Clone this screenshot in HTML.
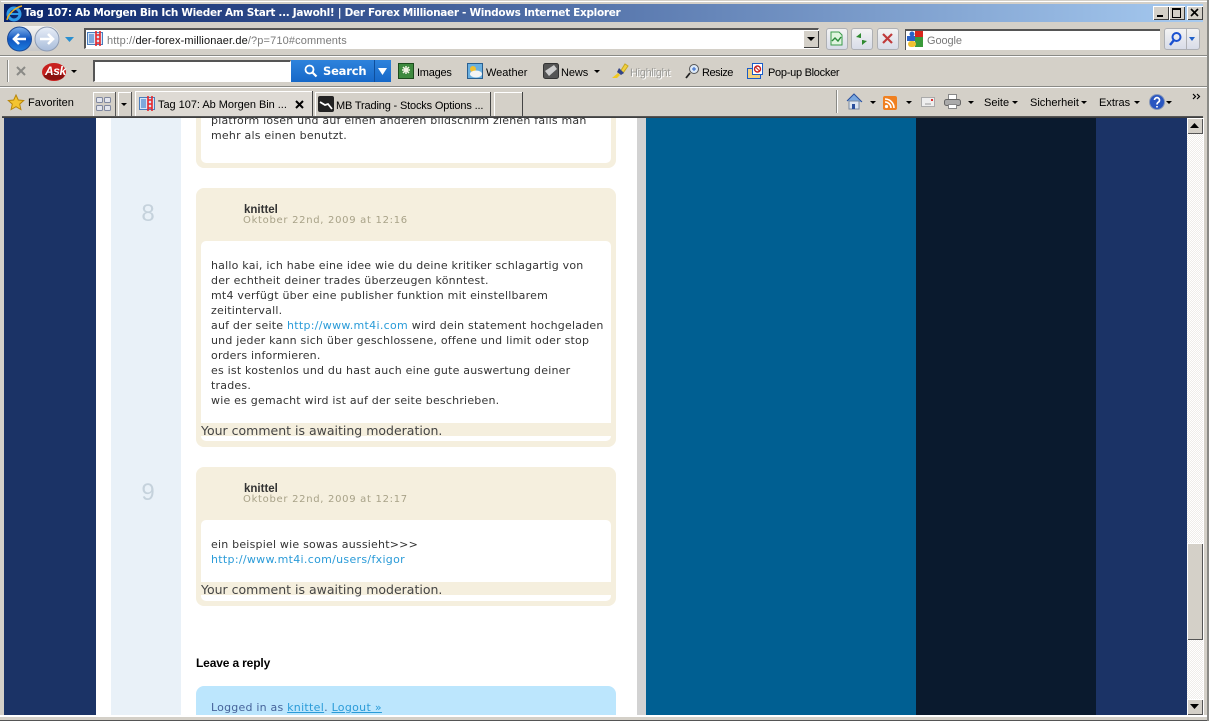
<!DOCTYPE html>
<html><head><meta charset="utf-8"><style>
html,body{margin:0;padding:0;width:1209px;height:721px;overflow:hidden;background:#d4d0c8}
.a{position:absolute}
.t{position:absolute;white-space:nowrap;font:11px/14px "Liberation Sans",sans-serif;color:#000}
.c{position:absolute;white-space:nowrap;font:11px/15px "DejaVu Sans",sans-serif;color:#333;letter-spacing:.21px}
.c a,.l{color:#2a9bd8;letter-spacing:.31px}
svg{position:absolute;overflow:visible}
.arr{position:absolute;width:0;height:0;border-left:3px solid transparent;border-right:3px solid transparent;border-top:3px solid #000}
</style></head><body>
<div class="a" style="left:0;top:0;width:1209px;height:721px;background:#d4d0c8;overflow:hidden">
<div class="a" style="left:1px;top:1px;width:1207px;height:1px;background:#fff"></div>
<div class="a" style="left:4px;top:4px;width:1199px;height:18px;background:linear-gradient(90deg,#0a246a,#a6caf0)"></div>
<svg style="left:6px;top:5px" width="17" height="17" viewBox="0 0 17 17"><ellipse cx="8" cy="9" rx="6" ry="6" fill="none" stroke="#2f9be8" stroke-width="3"/><path d="M3 9h11" stroke="#2f9be8" stroke-width="2"/><path d="M1 15C2 9 10 2 16 1" fill="none" stroke="#f0b020" stroke-width="1.5"/></svg>
<div class="t" style="left:24px;top:6px;font:bold 10.5px/15px 'DejaVu Sans',sans-serif;color:#fff;letter-spacing:-.31px">Tag 107: Ab Morgen Bin Ich Wieder Am Start ... Jawohl! | Der Forex Millionaer - Windows Internet Explorer</div>
<div class="a" style="left:1153px;top:6px;width:16px;height:14px;background:#d4d0c8;box-shadow:inset 1px 1px #fff,inset -1px -1px #404040"></div>
<div class="a" style="left:1157px;top:15px;width:6px;height:2px;background:#000"></div>
<div class="a" style="left:1169px;top:6px;width:16px;height:14px;background:#d4d0c8;box-shadow:inset 1px 1px #fff,inset -1px -1px #404040"></div>
<div class="a" style="left:1172px;top:8px;width:7px;height:7px;border:1px solid #000;border-top-width:2px"></div>
<div class="a" style="left:1187px;top:6px;width:16px;height:14px;background:#d4d0c8;box-shadow:inset 1px 1px #fff,inset -1px -1px #404040"></div>
<svg style="left:1187px;top:6px" width="16" height="14"><path d="M4 3l7 7M11 3l-7 7" stroke="#000" stroke-width="1.6"/></svg>

<!-- nav row -->
<div class="a" style="left:10px;top:26px;width:50px;height:25px;border-radius:13px;background:linear-gradient(#f4f4f4,#c8c8c8)"></div>
<svg style="left:7px;top:26px" width="54" height="26" viewBox="0 0 54 26"><defs><linearGradient id="b1" x1="0" y1="0" x2="0" y2="1"><stop offset="0" stop-color="#7fb0ea"/><stop offset=".5" stop-color="#0f55c0"/><stop offset="1" stop-color="#1f7fe0"/></linearGradient><linearGradient id="b2" x1="0" y1="0" x2="0" y2="1"><stop offset="0" stop-color="#e8eef8"/><stop offset="1" stop-color="#a8bcda"/></linearGradient></defs><circle cx="12.5" cy="13" r="12" fill="url(#b1)" stroke="#1c4a96"/><path d="M19 13H8M12 8l-5 5 5 5" fill="none" stroke="#fff" stroke-width="2.6"/><circle cx="40" cy="13" r="12" fill="url(#b2)" stroke="#8d9bb2"/><path d="M33 13h12M41 8l5 5-5 5" fill="none" stroke="#fff" stroke-width="2.6"/></svg>
<svg style="left:65px;top:37px" width="10" height="6"><path d="M0 0h9L4.500 5z" fill="#2a8fd0"/></svg>
<div class="a" style="left:84px;top:28px;width:735px;height:21px;background:#fff;border:1px solid #fff;border-top:2px solid #555;border-left:2px solid #555;box-sizing:border-box"></div>
<svg style="left:87px;top:31px" width="16" height="16"><rect x=".5" y="1.500" width="15" height="12" fill="#d5e6f7" stroke="#4a7dbd"/><rect x="2" y="3" width="5" height="9" fill="#7da8dc"/><path d="M9 0v15M13 0v15M9 4h4M9 8h4M9 12h4" stroke="#e8252a" stroke-width="1.6" fill="none"/></svg>
<div class="t" style="left:107px;top:34px;color:#7a7a7a;font-size:11px;letter-spacing:.13px">http://<span style="color:#111">der-forex-millionaer.de</span>/?p=710#comments</div>
<div class="a" style="left:803px;top:30px;width:16px;height:18px;background:#d4d0c8;box-shadow:inset 1px 1px #fff,inset -1px -1px #404040"></div>
<div class="arr" style="left:807px;top:37px;border-left-width:4px;border-right-width:4px;border-top-width:4px"></div>
<div class="a" style="left:826px;top:28px;width:20px;height:20px;border:1px solid #aeb0b4;border-radius:3px;background:linear-gradient(#f3f3f3,#d8dce8)"></div>
<svg style="left:829px;top:31px" width="15" height="15"><path d="M2 1h8l3 3v10H2z" fill="#dff5df" stroke="#3a9a4a"/><path d="M3 10l3-3 3 3 3-4" fill="none" stroke="#2a8a3a" stroke-width="1.4"/></svg>
<div class="a" style="left:851px;top:28px;width:20px;height:20px;border:1px solid #aeb0b4;border-radius:3px;background:linear-gradient(#f3f3f3,#d8dce8)"></div>
<svg style="left:854px;top:31px" width="15" height="15"><path d="M7 2L2 6l5 1zM8 14l5-4-5-1z" fill="#2f8a30"/><path d="M6 4v3M9 9v3" stroke="#2f8a30"/></svg>
<div class="a" style="left:877px;top:28px;width:20px;height:20px;border:1px solid #aeb0b4;border-radius:3px;background:linear-gradient(#f3f3f3,#d8dce8)"></div>
<svg style="left:880px;top:31px" width="15" height="15"><path d="M3 3l9 9M12 3l-9 9" stroke="#c03a3a" stroke-width="2.2"/></svg>
<div class="a" style="left:905px;top:29px;width:255px;height:21px;background:#fff;border-top:2px solid #555;border-left:1px solid #555;box-sizing:border-box"></div>
<svg style="left:907px;top:31px" width="18" height="16"><rect width="16" height="16" fill="#fff"/><rect x="8" width="8" height="6" fill="#d8261c"/><rect x="8" y="6" width="8" height="10" fill="#3a9a3a"/><rect x="0" y="5" width="8" height="5" fill="#2a62c8"/><rect x="1" y="10" width="8" height="6" rx="3" fill="#f0c030"/><circle cx="5" cy="3" r="2.500" fill="#2a62c8"/></svg>
<div class="t" style="left:927px;top:34px;color:#7a7a7a;font-size:11px;letter-spacing:-.1px">Google</div>
<div class="a" style="left:1164px;top:28px;width:34px;height:20px;border:1px solid #aeb0b4;border-radius:3px;background:linear-gradient(#f3f3f3,#d8dce8)"></div>
<div class="a" style="left:1186px;top:28px;width:1px;height:22px;background:#aeb0b4"></div>
<svg style="left:1168px;top:31px" width="15" height="16"><circle cx="8.500" cy="6" r="4" fill="none" stroke="#1a50d0" stroke-width="2"/><path d="M6 9l-4 5" stroke="#1a50d0" stroke-width="2.400"/></svg>
<div class="arr" style="left:1189px;top:37px;border-top:4px solid #2060c8"></div>

<div class="a" style="left:0;top:55px;width:1209px;height:1px;background:#8a8a86"></div>
<div class="a" style="left:0;top:56px;width:1209px;height:1px;background:#fff"></div>

<!-- ask row -->
<div class="a" style="left:7px;top:60px;width:1px;height:22px;background:#8a8a86;border-right:1px solid #fff"></div>
<svg style="left:16px;top:66px" width="11" height="10"><path d="M1 1l8 8M9 1l-8 8" stroke="#8a8a86" stroke-width="2"/></svg>
<svg style="left:42px;top:62px" width="25" height="20"><ellipse cx="12" cy="10" rx="12" ry="9" fill="#c8201e"/><ellipse cx="12" cy="14" rx="10" ry="4" fill="#8c1210"/></svg>
<div class="t" style="left:45px;top:64px;color:#fff;font:bold italic 12px/15px 'Liberation Sans',sans-serif;letter-spacing:-.4px">Ask</div>
<div class="arr" style="left:71px;top:70px"></div>
<div class="a" style="left:93px;top:60px;width:198px;height:22px;background:#fff;border-top:2px solid #555;border-left:2px solid #555;border-right:1px solid #fff;border-bottom:1px solid #fff;box-sizing:border-box"></div>
<div class="a" style="left:291px;top:60px;width:100px;height:22px;background:linear-gradient(#2e83dc,#1668c8)"></div>
<div class="a" style="left:374px;top:60px;width:1px;height:22px;background:#0f4f9c"></div>
<svg style="left:304px;top:64px" width="14" height="14"><circle cx="5.500" cy="5.500" r="4" fill="none" stroke="#fff" stroke-width="1.800"/><path d="M8.500 8.500l4 4" stroke="#fff" stroke-width="2.200"/></svg>
<div class="t" style="left:323px;top:64px;color:#fff;font:bold 11.500px/15px 'DejaVu Sans',sans-serif;letter-spacing:-.2px">Search</div>
<svg style="left:378px;top:68px" width="9" height="7"><path d="M0 0h9L4.500 7z" fill="#fff"/></svg>

<svg style="left:398px;top:63px" width="16" height="16"><rect x=".5" y=".5" width="15" height="15" fill="#3f8a3f" stroke="#1c4a1c"/><path d="M8 3v8M4 7h8M5 4l6 6M11 4l-6 6" stroke="#f2f2e4" stroke-width="1.500"/></svg>
<div class="t" style="left:417px;top:66px;letter-spacing:-.25px">Images</div>
<svg style="left:467px;top:63px" width="16" height="16"><rect x=".5" y=".5" width="15" height="15" fill="#6ab0e0" stroke="#2a5f90"/><circle cx="6" cy="6" r="3" fill="#f0c030"/><ellipse cx="9" cy="11" rx="6" ry="3.500" fill="#f4f4f4"/></svg>
<div class="t" style="left:486px;top:66px">Weather</div>
<svg style="left:543px;top:63px" width="16" height="16"><rect x=".5" y=".5" width="15" height="15" rx="2" fill="#555" stroke="#333"/><path d="M2 8l9-6 3 4-8 7z" fill="#ccc"/></svg>
<div class="t" style="left:561px;top:66px;letter-spacing:-.1px">News</div>
<div class="arr" style="left:594px;top:70px"></div>
<svg style="left:611px;top:63px" width="17" height="16"><path d="M9 9l5-8 3 2-5 7z" fill="#f0d040" stroke="#c8a820"/><path d="M8 5l5 5-3 2-4-3z" fill="#334488"/><path d="M1 15l6-5 2 2-3 3z" fill="#f0c820"/></svg>
<div class="t" style="left:630px;top:66px;color:#9a9a96;text-shadow:1px 1px 0 #fff;letter-spacing:-.3px">Highlight</div>
<svg style="left:685px;top:63px" width="15" height="16"><circle cx="9" cy="6" r="4.500" fill="#dce8f6" stroke="#555"/><path d="M9 4v4M7 6h4" stroke="#2a62c8"/><path d="M5 10l-4 5" stroke="#222" stroke-width="1.800"/></svg>
<div class="t" style="left:702px;top:66px;letter-spacing:-.45px">Resize</div>
<svg style="left:747px;top:63px" width="17" height="16"><rect x=".5" y="5.500" width="13" height="10" fill="#f2d080" stroke="#1a5cc8"/><rect x="5.500" y=".5" width="10" height="11" fill="#fff" stroke="#1a5cc8"/><circle cx="10.500" cy="6" r="3" fill="#fff" stroke="#c82020" stroke-width="1.400"/><path d="M8.500 4l4 4" stroke="#c82020"/></svg>
<div class="t" style="left:768px;top:66px;letter-spacing:-.28px">Pop-up Blocker</div>

<div class="a" style="left:0;top:86px;width:1209px;height:1px;background:#8a8a86"></div>
<div class="a" style="left:0;top:87px;width:1209px;height:1px;background:#fff"></div>

<!-- favourites row -->
<svg style="left:8px;top:94px" width="17" height="16"><path d="M8 1l2.300 5 5.400.5-4 3.600 1.200 5.400L8 12.700 3.100 15.500l1.200-5.400-4-3.600L5.700 6z" fill="#f4c430" stroke="#b8860b"/></svg>
<div class="t" style="left:28px;top:96px">Favoriten</div>
<div class="a" style="left:93px;top:92px;width:22px;height:24px;border-right:1px solid #555;box-shadow:inset 1px 1px #fff"></div>
<svg style="left:96px;top:97px" width="16" height="15"><rect x=".5" y=".5" width="6" height="5" rx="1" fill="#e4e6ee" stroke="#8088a0"/><rect x="8.500" y=".5" width="6" height="5" rx="1" fill="#e4e6ee" stroke="#8088a0"/><rect x=".5" y="8.500" width="6" height="5" rx="1" fill="#e4e6ee" stroke="#8088a0"/><rect x="8.500" y="8.500" width="6" height="5" rx="1" fill="#e4e6ee" stroke="#8088a0"/></svg>
<div class="a" style="left:118px;top:92px;width:13px;height:24px;border-right:1px solid #555;box-shadow:inset 1px 1px #fff"></div>
<div class="arr" style="left:121px;top:103px"></div>
<div class="a" style="left:135px;top:91px;width:177px;height:26px;background:#dedad4;box-shadow:inset 1px 1px #fff;border-right:1px solid #444"></div>
<svg style="left:139px;top:96px" width="16" height="16"><rect x=".5" y="1.500" width="15" height="12" fill="#d5e6f7" stroke="#4a7dbd"/><rect x="2" y="3" width="5" height="9" fill="#7da8dc"/><path d="M9 0v15M13 0v15M9 4h4M9 8h4M9 12h4" stroke="#e8252a" stroke-width="1.600" fill="none"/></svg>
<div class="t" style="left:158px;top:98px;letter-spacing:-.03px">Tag 107: Ab Morgen Bin ...</div>
<svg style="left:295px;top:100px" width="10" height="10"><path d="M1 1l7 7M8 1l-7 7" stroke="#000" stroke-width="2"/></svg>
<div class="a" style="left:315px;top:92px;width:175px;height:24px;border-right:1px solid #444;box-shadow:inset 1px 1px #fff"></div>
<svg style="left:318px;top:96px" width="16" height="16"><rect width="16" height="16" rx="2" fill="#222"/><path d="M2 6l5 3 3-1 4 5" fill="none" stroke="#fff" stroke-width="1.800"/></svg>
<div class="t" style="left:336px;top:99px;letter-spacing:-.16px">MB Trading - Stocks Options ...</div>
<div class="a" style="left:494px;top:92px;width:28px;height:24px;border-right:1px solid #444;box-shadow:inset 1px 1px #fff"></div>
<div class="a" style="left:836px;top:90px;width:1px;height:23px;background:#8a8a86;border-right:1px solid #fff"></div>
<svg style="left:846px;top:93px" width="17" height="17"><path d="M1 8l7-7 8 8" fill="#7aa8e0" stroke="#2a4f9c"/><path d="M3 8h10v8H3z" fill="#dde6f0" stroke="#7a8aa0"/><rect x="6" y="11" width="3" height="5" fill="#2a4f9c"/></svg>
<div class="arr" style="left:870px;top:101px"></div>
<svg style="left:883px;top:96px" width="14" height="14"><rect width="14" height="14" rx="2" fill="#f08020"/><circle cx="3.500" cy="10.500" r="1.600" fill="#fff"/><path d="M2 6a6 6 0 0 1 6 6M2 3a9 9 0 0 1 9 9" fill="none" stroke="#fff" stroke-width="1.600"/></svg>
<div class="arr" style="left:906px;top:101px"></div>
<svg style="left:921px;top:97px" width="15" height="11"><rect x=".5" y=".5" width="13" height="9" fill="#eee" stroke="#aaa"/><rect x="10" y="2" width="2" height="2" fill="#e03030"/><path d="M4 7h6" stroke="#999"/></svg>
<svg style="left:944px;top:94px" width="17" height="16"><rect x="4.500" y=".5" width="8" height="5" fill="#fff" stroke="#888"/><rect x=".5" y="5.500" width="16" height="6" rx="2" fill="#aaa" stroke="#666"/><rect x="4.500" y="10.500" width="8" height="4" fill="#fff" stroke="#888"/></svg>
<div class="arr" style="left:968px;top:101px"></div>
<div class="t" style="left:984px;top:96px">Seite</div>
<div class="arr" style="left:1012px;top:101px"></div>
<div class="t" style="left:1030px;top:96px">Sicherheit</div>
<div class="arr" style="left:1081px;top:101px"></div>
<div class="t" style="left:1099px;top:96px">Extras</div>
<div class="arr" style="left:1134px;top:101px"></div>
<svg style="left:1149px;top:94px" width="16" height="16"><circle cx="8" cy="8" r="7.500" fill="#2a56c0" stroke="#8898b8"/><path d="M5.500 6a2.500 2.500 0 1 1 3.500 2.400C8.200 9 8 9.500 8 10.500M8 12v1.500" fill="none" stroke="#fff" stroke-width="1.700"/></svg>
<div class="arr" style="left:1166px;top:101px"></div>
<svg style="left:1192px;top:93px" width="9" height="7"><path d="M1 1l2.500 2.500L1 6M5 1l2.500 2.500L5 6" fill="none" stroke="#000" stroke-width="1.200"/></svg>

<!-- page -->
<div class="a" style="left:2px;top:116px;width:1201px;height:1px;background:#555"></div>
<div class="a" style="left:2px;top:117px;width:1201px;height:1px;background:#404040"></div>
<div class="a" style="left:4px;top:118px;width:1183px;height:597px;background:#1b3366;overflow:hidden">
 <div class="a" style="left:92px;top:0;width:541px;height:597px;background:#fff"></div>
 <div class="a" style="left:107px;top:0;width:70px;height:597px;background:#e9f1f8"></div>
 <div class="a" style="left:633px;top:0;width:9px;height:597px;background:#d2d2d2"></div>
 <div class="a" style="left:642px;top:0;width:270px;height:597px;background:#005f92"></div>
 <div class="a" style="left:912px;top:0;width:180px;height:597px;background:#0a1a2e"></div>

 <!-- comment 7 -->
 <div class="a" style="left:192px;top:-60px;width:420px;height:110px;background:#f5efde;border-radius:8px"></div>
 <div class="a" style="left:197px;top:-60px;width:410px;height:105px;background:#fff;border-radius:5px"></div>
 <div class="c" style="left:207px;top:-5px">platform lösen und auf einen anderen bildschirm ziehen falls man<br>mehr als einen benutzt.</div>

 <!-- comment 8 -->
 <div class="a" style="left:192px;top:70px;width:420px;height:259px;background:#f5efde;border-radius:8px"></div>
 <div class="a" style="left:197px;top:123px;width:410px;height:200px;background:#fff;border-radius:5px"></div>
 <div class="a" style="left:197px;top:305px;width:410px;height:13px;background:#f5efde"></div>
 <div class="a" style="left:109px;top:83px;width:70px;text-align:center;font:24px/26px 'Liberation Sans',sans-serif;color:#c5d2dc">8</div>
 <div class="c" style="left:240px;top:85px;font:bold 11.5px/14px 'Liberation Sans',sans-serif;color:#333;letter-spacing:0">knittel</div>
 <div class="c" style="left:239px;top:96px;font-size:10px;line-height:14px;color:#a8a288;letter-spacing:.7px">Oktober 22nd, 2009 at 12:16</div>
 <div class="c" style="left:207px;top:140px">hallo kai, ich habe eine idee wie du deine kritiker schlagartig von<br>der echtheit deiner trades überzeugen könntest.<br>mt4 verfügt über eine publisher funktion mit einstellbarem<br>zeitintervall.<br>auf der seite <a>http://www.mt4i.com</a> wird dein statement hochgeladen<br>und jeder kann sich über geschlossene, offene und limit oder stop<br>orders informieren.<br>es ist kostenlos und du hast auch eine gute auswertung deiner<br>trades.<br>wie es gemacht wird ist auf der seite beschrieben.</div>
 <div class="c" style="left:197px;top:305px;font-size:12.500px;line-height:15px;color:#444;letter-spacing:0">Your comment is awaiting moderation.</div>

 <!-- comment 9 -->
 <div class="a" style="left:192px;top:349px;width:420px;height:139px;background:#f5efde;border-radius:8px"></div>
 <div class="a" style="left:197px;top:402px;width:410px;height:81px;background:#fff;border-radius:5px"></div>
 <div class="a" style="left:197px;top:464px;width:410px;height:13px;background:#f5efde"></div>
 <div class="a" style="left:109px;top:362px;width:70px;text-align:center;font:24px/26px 'Liberation Sans',sans-serif;color:#c5d2dc">9</div>
 <div class="c" style="left:240px;top:364px;font:bold 11.5px/14px 'Liberation Sans',sans-serif;color:#333;letter-spacing:0">knittel</div>
 <div class="c" style="left:239px;top:375px;font-size:10px;line-height:14px;color:#a8a288;letter-spacing:.7px">Oktober 22nd, 2009 at 12:17</div>
 <div class="c" style="left:207px;top:419px">ein beispiel wie sowas aussieht&gt;&gt;&gt;<br><a>http://www.mt4i.com/users/fxigor</a></div>
 <div class="c" style="left:197px;top:464px;font-size:12.500px;line-height:15px;color:#444;letter-spacing:0">Your comment is awaiting moderation.</div>

 <div class="c" style="left:192px;top:538px;font:bold 12px/15px 'Liberation Sans',sans-serif;color:#000;letter-spacing:-.15px">Leave a reply</div>
 <div class="a" style="left:192px;top:568px;width:420px;height:40px;background:#bce6fd;border-radius:8px 8px 0 0"></div>
 <div class="c" style="left:207px;top:582px;color:#46639a">Logged in as <a style="text-decoration:underline">knittel</a>. <a style="text-decoration:underline">Logout »</a></div>
</div>

<!-- scrollbar -->
<div class="a" style="left:1187px;top:118px;width:16px;height:597px;background-color:#efedea;background-image:linear-gradient(45deg,#fff 25%,transparent 25%,transparent 75%,#fff 75%),linear-gradient(45deg,#fff 25%,transparent 25%,transparent 75%,#fff 75%);background-size:2px 2px;background-position:0 0,1px 1px"></div>
<div class="a" style="left:1187px;top:118px;width:16px;height:16px;background:#d4d0c8;box-shadow:inset 1px 1px #fff,inset -1px -1px #555"></div>
<svg style="left:1190px;top:123px" width="10" height="6"><path d="M0 5h9L4.500 0z" fill="#000"/></svg>
<div class="a" style="left:1187px;top:543px;width:16px;height:97px;background:#d4d0c8;box-shadow:inset 1px 1px #fff,inset -1px -1px #555"></div>
<div class="a" style="left:1187px;top:699px;width:16px;height:16px;background:#d4d0c8;box-shadow:inset 1px 1px #fff,inset -1px -1px #555"></div>
<svg style="left:1190px;top:704px" width="10" height="6"><path d="M0 0h9L4.500 5z" fill="#000"/></svg>

<!-- frame -->
<div class="a" style="left:0;top:715px;width:1209px;height:2px;background:#fff"></div>
<div class="a" style="left:0;top:717px;width:1209px;height:3px;background:#d4d0c8"></div>
<div class="a" style="left:0;top:720px;width:1209px;height:1px;background:#555"></div>
<div class="a" style="left:1203px;top:118px;width:1px;height:597px;background:#fff"></div>
<div class="a" style="left:1207px;top:0;width:2px;height:721px;background:#8a8a86"></div>
</div>
</body></html>
